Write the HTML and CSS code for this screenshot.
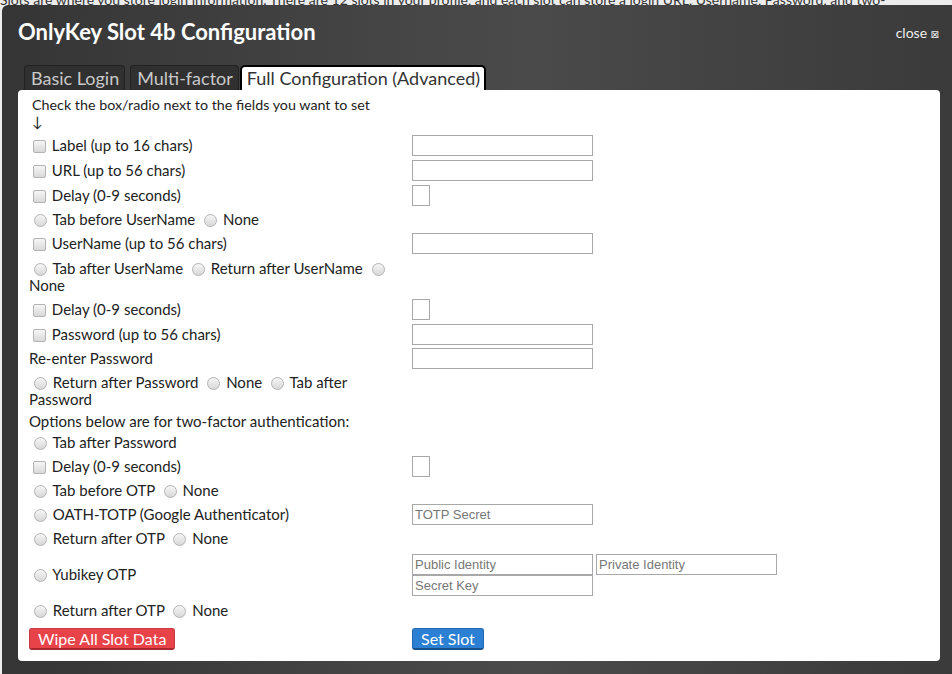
FILE: index.html
```html
<!DOCTYPE html>
<html>
<head>
<meta charset="utf-8">
<title>OnlyKey Slot 4b Configuration</title>
<link rel="stylesheet" href="styles.css">
</head>
<body>
<p class="page-text">Slots are where you store login information. There are 12 slots in your profile, and each slot can store a login URL, Username, Password, and two-</p>
<div class="modal">
  <div class="modal-head">
    <h1 class="title">OnlyKey Slot 4b Configuration</h1>
    <a class="close">close <span class="close-x">⊠</span></a>
  </div>
  <div class="tabs">
    <span class="tab">Basic Login</span>
    <span class="tab">Multi-factor</span>
    <span class="tab active">Full Configuration (Advanced)</span>
  </div>
  <div class="panel">
    <div class="intro">Check the box/radio next to the fields you want to set<br>↓</div>
    <div class="rows">
      <div class="row r-in"><div class="cell"><input type="checkbox" class="cb"> Label (up to 16 chars)</div><div class="cell"><input type="text" class="field"></div></div>
      <div class="row r-in"><div class="cell"><input type="checkbox" class="cb"> URL (up to 56 chars)</div><div class="cell"><input type="text" class="field"></div></div>
      <div class="row r-in"><div class="cell"><input type="checkbox" class="cb"> Delay (0-9 seconds)</div><div class="cell"><input type="text" class="field small"></div></div>
      <div class="row"><div class="cell"><input type="radio" class="rb" name="a"> Tab before UserName <input type="radio" class="rb" name="a"> None</div><div class="cell"></div></div>
      <div class="row r-in"><div class="cell"><input type="checkbox" class="cb"> UserName (up to 56 chars)</div><div class="cell"><input type="text" class="field"></div></div>
      <div class="row r-wrap"><div class="cell"><input type="radio" class="rb" name="b"> Tab after UserName <input type="radio" class="rb" name="b"> Return after UserName <input type="radio" class="rb" name="b"> None</div><div class="cell"></div></div>
      <div class="row r-in"><div class="cell"><input type="checkbox" class="cb"> Delay (0-9 seconds)</div><div class="cell"><input type="text" class="field small"></div></div>
      <div class="row r-in"><div class="cell"><input type="checkbox" class="cb"> Password (up to 56 chars)</div><div class="cell"><input type="password" class="field"></div></div>
      <div class="row"><div class="cell">Re-enter Password</div><div class="cell"><input type="password" class="field"></div></div>
      <div class="row r-wrap"><div class="cell"><input type="radio" class="rb" name="c"> Return after Password <input type="radio" class="rb" name="c"> None <input type="radio" class="rb" name="c"> Tab after Password</div><div class="cell"></div></div>
      <div class="row r-note"><div class="cell">Options below are for two-factor authentication:</div><div class="cell"></div></div>
      <div class="row"><div class="cell"><input type="radio" class="rb" name="d"> Tab after Password</div><div class="cell"></div></div>
      <div class="row r-in"><div class="cell"><input type="checkbox" class="cb"> Delay (0-9 seconds)</div><div class="cell"><input type="text" class="field small"></div></div>
      <div class="row"><div class="cell"><input type="radio" class="rb" name="e"> Tab before OTP <input type="radio" class="rb" name="e"> None</div><div class="cell"></div></div>
      <div class="row r-in"><div class="cell"><input type="radio" class="rb" name="f"> OATH-TOTP (Google Authenticator)</div><div class="cell"><input type="text" class="field" placeholder="TOTP Secret"></div></div>
      <div class="row"><div class="cell"><input type="radio" class="rb" name="g"> Return after OTP <input type="radio" class="rb" name="g"> None</div><div class="cell"></div></div>
      <div class="row r-yk"><div class="cell"><input type="radio" class="rb" name="f"> Yubikey OTP</div><div class="cell yk"><input type="text" class="field" placeholder="Public Identity"><input type="text" class="field" placeholder="Private Identity"><input type="text" class="field" placeholder="Secret Key"></div></div>
      <div class="row"><div class="cell"><input type="radio" class="rb" name="h"> Return after OTP <input type="radio" class="rb" name="h"> None</div><div class="cell"></div></div>
      <div class="row r-btn"><div class="cell"><button class="btn btn-red">Wipe All Slot Data</button></div><div class="cell"><button class="btn btn-blue">Set Slot</button></div></div>
    </div>
  </div>
</div>
</body>
</html>
```

FILE: styles.css
```css
html, body {
  margin: 0;
  padding: 0;
}
body {
  background: #ececec;
  font-family: Lato, "Open Sans", sans-serif;
  font-size: 14px;
  color: #222;
  width: 952px;
  height: 674px;
  overflow: hidden;
  position: relative;
}
.page-text {
  margin: -9px 0 0 0;
  line-height: 17px;
  white-space: nowrap;
  color: #333;
}
.modal {
  position: absolute;
  left: 2px;
  top: 5px;
  right: -10px;
  bottom: -10px;
  border-radius: 6px 6px 0 0;
  background: linear-gradient(to right, #353535 0%, #474747 45%, #4a4a4a 55%, #3a3a3a 100%);
  padding: 14px 22px 0 16px;
}
.modal-head {
  display: flex;
  justify-content: space-between;
  align-items: center;
  height: 26px;
}
.title {
  margin: 0;
  font-size: 22px;
  line-height: 26px;
  font-weight: 700;
  color: #fff;
}
.close {
  color: #eee;
  font-size: 14px;
  margin-right: 1px;
}
.close-x {
  font-family: "DejaVu Sans", sans-serif;
  font-size: 10px;
}
.tabs {
  display: flex;
  gap: 5px;
  margin: 20px 0 0 6px;
  height: 25px;
  align-items: flex-end;
}
.tab {
  display: block;
  height: 25px;
  box-sizing: border-box;
  padding: 0 5px 0 6px;
  font-size: 18px;
  line-height: 24px;
  color: #c9c9c9;
  background: #303030;
  border: 1px solid #222;
  border-bottom: none;
  border-radius: 4px 4px 0 0;
}
.tab.active {
  background: #fff;
  color: #333;
  border: 2px solid #000;
  border-bottom: none;
  border-radius: 5px 5px 0 0;
  line-height: 23px;
  margin-left: -4px;
  padding: 0 4px 0 5px;
}
.panel {
  background: #fff;
  border-radius: 4px;
  padding: 6px 11px 5px 11px;
}
.intro {
  padding-left: 3px;
  font-size: 14.3px;
  line-height: 17px;
  margin-bottom: 3px;
}
.row {
  display: grid;
  grid-template-columns: 383px 1fr;
  align-items: center;
  height: 23px;
  font-size: 15px;
}
.row.r-in { height: 25px; }
.row.r-wrap { height: 41px; }
.row.r-note { height: 20px; }
.row.r-yk { height: 49px; }
.row.r-btn { height: 34px; }
.cell {
  line-height: 17px;
}
.cb, .rb {
  appearance: none;
  -webkit-appearance: none;
  width: 13px;
  height: 13px;
  box-sizing: border-box;
  border: 1px solid #b3b3b3;
  background: linear-gradient(#f6f6f6, #d8d8d8);
  vertical-align: -2px;
  margin: 0 2px 0 4px;
}
.cb {
  border-radius: 2px;
}
.rb {
  border-radius: 50%;
  margin-left: 5px;
}
.field {
  display: block;
  box-sizing: border-box;
  width: 181px;
  height: 21px;
  margin: 0;
  border: 1px solid #a8a8a8;
  padding: 1px 2px;
  font-family: "Liberation Sans", Arial, sans-serif;
  font-size: 13px;
  color: #222;
  background: #fff;
}
.field::placeholder {
  color: #777;
}
.field.small {
  width: 18px;
}
.yk {
  display: grid;
  grid-template-columns: 181px 181px;
  column-gap: 3px;
}
.btn {
  display: block;
  height: 22px;
  box-sizing: border-box;
  padding: 0 8px;
  font-family: Lato, "Open Sans", sans-serif;
  font-size: 16px;
  line-height: 20px;
  color: #fff;
  border-radius: 3px;
}
.btn-red {
  background: #e9434a;
  border: 1px solid #c63a40;
  border-bottom: 2px solid #a8282e;
}
.btn-blue {
  background: #2b80d4;
  border: 1px solid #2368ad;
  border-bottom: 2px solid #18508a;
}
```
